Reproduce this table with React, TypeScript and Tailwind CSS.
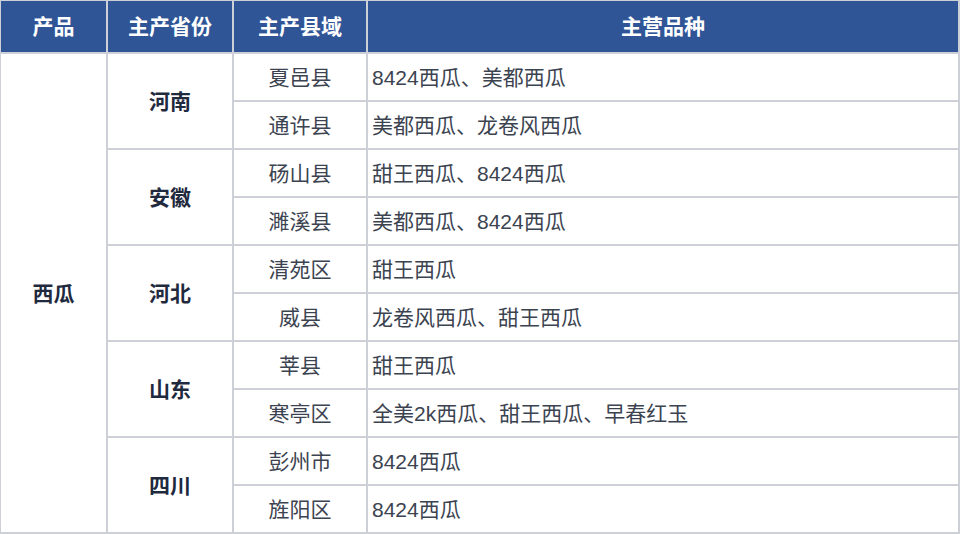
import React from 'react'

const groups: { province: string; rows: [string, string][] }[] = [
  { province: '河南', rows: [['夏邑县', '8424西瓜、美都西瓜'], ['通许县', '美都西瓜、龙卷风西瓜']] },
  { province: '安徽', rows: [['砀山县', '甜王西瓜、8424西瓜'], ['濉溪县', '美都西瓜、8424西瓜']] },
  { province: '河北', rows: [['清苑区', '甜王西瓜'], ['威县', '龙卷风西瓜、甜王西瓜']] },
  { province: '山东', rows: [['莘县', '甜王西瓜'], ['寒亭区', '全美2k西瓜、甜王西瓜、早春红玉']] },
  { province: '四川', rows: [['彭州市', '8424西瓜'], ['旌阳区', '8424西瓜']] },
]

const cell = 'border-2 border-[#cdd0d6] h-[48px] p-0'

export default function App() {
  return (
    <div className="w-[961px] h-[534px] bg-white overflow-hidden font-['Liberation_Sans','Noto_Sans_CJK_SC',sans-serif]">
      <table className="border-collapse table-fixed w-[961px] -mt-px -ml-px text-[21px] leading-none">
        <colgroup>
          <col className="w-[107px]" />
          <col className="w-[126px]" />
          <col className="w-[134px]" />
          <col />
        </colgroup>
        <thead>
          <tr className="bg-[#2f5597] text-white font-bold">
            <th className="border-2 border-[#cdd0d6] h-[53px] font-bold">产品</th>
            <th className="border-2 border-[#cdd0d6] font-bold">主产省份</th>
            <th className="border-2 border-[#cdd0d6] font-bold">主产县域</th>
            <th className="border-2 border-[#cdd0d6] font-bold">主营品种</th>
          </tr>
        </thead>
        <tbody>
          {groups.map((g, gi) =>
            g.rows.map(([county, kinds], ri) => (
              <tr key={county}>
                {gi === 0 && ri === 0 ? (
                  <td rowSpan={10} className={`${cell} text-center font-bold text-[#1f2a3e]`}>西瓜</td>
                ) : null}
                {ri === 0 ? (
                  <td rowSpan={2} className={`${cell} text-center font-bold text-[#1f2a3e]`}>{g.province}</td>
                ) : null}
                <td className={`${cell} text-center text-[#3c4350]`}>{county}</td>
                <td className={`${cell} pl-[4px] text-[#3c4350]`}>{kinds}</td>
              </tr>
            ))
          )}
        </tbody>
      </table>
    </div>
  )
}
